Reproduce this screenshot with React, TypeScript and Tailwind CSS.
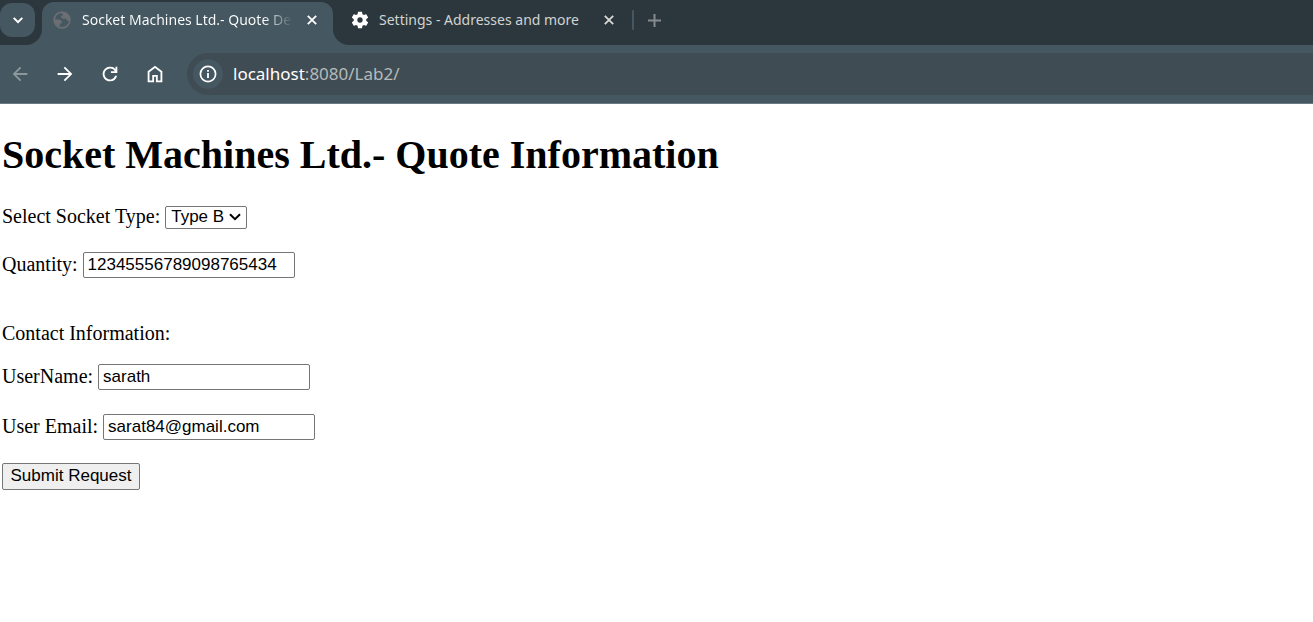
import React from "react";

const uiFont = "font-['Noto_Sans','Open_Sans',sans-serif]";
const labelClass = "pb-[2px]";
const fieldClass =
  "h-[26px] w-[212px] rounded-[2px] border border-[#767676] bg-white px-1 font-['Liberation_Sans',Arial,sans-serif] text-[17px] leading-5 text-black";

function CloseIcon() {
  return (
    <svg width="10" height="10" viewBox="0 0 10 10" fill="none" stroke="currentColor" strokeWidth="1.8" aria-hidden="true">
      <path d="M0.8 0.8 9.2 9.2M9.2 0.8 0.8 9.2" />
    </svg>
  );
}

function GlobeIcon() {
  return (
    <svg width="18" height="18" viewBox="0 0 18 18" aria-hidden="true">
      <circle cx="9" cy="9" r="7.9" fill="none" stroke="#6b6e72" strokeWidth="1.7" />
      <path fill="#6b6e72" d="M1.2 8.6h4.200c2 0 3.400 1 3.400 2.600v1.200H6.900v2.300l-2.100.3C2.600 13.600 1.200 11.400 1.200 8.600zM8.600 1.200c3.400 0 6 1.600 7.200 4.200l.9 4.400h-1.800c-1.200 0-1.600-.8-1.600-2H10c-1.300 0-2-.6-2-1.700 0-1 .7-1.600 1.700-1.600V2.900H8.600z" />
    </svg>
  );
}

function GearIcon() {
  return (
    <svg width="20" height="20" viewBox="0 0 24 24" fill="#fff" aria-hidden="true">
      <path d="M19.43 12.98c.04-.32.07-.64.07-.98s-.03-.66-.07-.98l2.11-1.65c.19-.15.24-.42.12-.64l-2-3.46c-.12-.22-.39-.3-.61-.22l-2.49 1c-.52-.4-1.080-.73-1.690-.98l-.38-2.650C14.460 2.180 14.250 2 14 2h-4c-.25 0-.46.18-.49.42l-.38 2.650c-.61.25-1.170.59-1.690.98l-2.490-1c-.23-.09-.49 0-.61.22l-2 3.460c-.13.22-.07.49.12.64l2.110 1.650c-.04.32-.07.65-.07.98s.03.66.07.98l-2.110 1.650c-.19.15-.24.42-.12.64l2 3.460c.12.22.39.3.61.22l2.490-1c.52.4 1.080.73 1.690.98l.38 2.650c.03.24.24.42.49.42h4c.25 0 .46-.18.49-.42l.38-2.650c.61-.25 1.170-.59 1.690-.98l2.490 1c.23.09.49 0 .61-.22l2-3.460c.12-.22.07-.49-.12-.64l-2.110-1.650zM12 15.200a3.200 3.200 0 1 1 0-6.400 3.200 3.200 0 0 1 0 6.400z" />
    </svg>
  );
}

function NavButton({ label, dim, children }: { label: string; dim?: boolean; children: React.ReactNode }) {
  return (
    <button aria-label={label} className={`flex size-[33px] items-center justify-center ${dim ? "text-[#8d989d]" : "text-white"}`}>
      <svg width="22" height="22" viewBox="0 0 24 24" fill="currentColor" aria-hidden="true">
        {children}
      </svg>
    </button>
  );
}

function TabStrip() {
  return (
    <div className="flex h-[45px] bg-[#455760]">
      <div className="w-[42px] shrink-0 rounded-br-2xl bg-[#2c373d] pt-[3px]">
        <button aria-label="Search tabs" className="flex h-[34px] w-[35px] items-center justify-center rounded-xl bg-[#455760] text-white">
          <svg width="10" height="7" viewBox="0 0 10 7" fill="none" stroke="currentColor" strokeWidth="2" aria-hidden="true">
            <path d="M0.700 0.900 5 5.200 9.300 0.900" />
          </svg>
        </button>
      </div>
      <div className="w-[291px] shrink-0 bg-[#2c373d] pt-[2px]">
        <div className="flex h-full items-center rounded-t-xl bg-[#455760] pr-4 pb-[7px] pl-[11px] text-white">
          <GlobeIcon />
          <span className={`ml-[11px] w-[211px] bg-[linear-gradient(90deg,#fff_86%,transparent)] bg-clip-text text-[14px] leading-5 whitespace-nowrap text-transparent ${uiFont}`}>
            Socket Machines Ltd.- Quote De
          </span>
          <button aria-label="Close tab" className="ml-[14px]">
            <CloseIcon />
          </button>
        </div>
      </div>
      <div className="flex min-w-0 flex-1 items-center rounded-bl-2xl bg-[#2c373d] pb-[5px] pl-[17px]">
        <GearIcon />
        <span className={`ml-[9px] w-[204px] text-[14px] leading-5 whitespace-nowrap text-[#d0d3d2] ${uiFont}`}>
          Settings - Addresses and more
        </span>
        <button aria-label="Close tab" className="ml-[21px] text-[#d8dbd5]">
          <CloseIcon />
        </button>
        <span className="ml-[18px] h-5 w-0.5 rounded-full bg-[#455760]" />
        <button aria-label="New tab" className="ml-[14px] text-[#858b8d]">
          <svg width="13" height="13" viewBox="0 0 13 13" fill="none" stroke="currentColor" strokeWidth="2" aria-hidden="true">
            <path d="M6.500 0V13M0 6.500H13" />
          </svg>
        </button>
      </div>
    </div>
  );
}

function Toolbar() {
  return (
    <div className="flex h-[59px] items-center border-b border-[#6d7a81] bg-[#455760] pl-[3px]">
      <div className="flex shrink-0 gap-3">
        <NavButton label="Back" dim>
          <path d="M20 11H7.830l5.590-5.590L12 4l-8 8 8 8 1.410-1.410L7.830 13H20z" />
        </NavButton>
        <NavButton label="Forward">
          <path d="m12 4-1.410 1.410L16.170 11H4v2h12.170l-5.580 5.590L12 20l8-8z" />
        </NavButton>
        <NavButton label="Reload">
          <path d="M12 20a8 8 0 1 1 6-13.250V4h2v7h-7V9h4.200A6 6 0 1 0 17.650 14h2.100A8 8 0 0 1 12 20z" />
        </NavButton>
        <NavButton label="Home">
          <path d="M6 19h3v-6h6v6h3v-9l-6-4.500L6 10zm-2 2V9l8-6 8 6v12h-7v-6h-2v6z" />
        </NavButton>
      </div>
      <div className={`ml-4 flex h-[42px] min-w-0 flex-1 items-center rounded-l-full bg-[#404c53] pl-[6px] ${uiFont}`}>
        <button aria-label="View site information" className="flex size-[30px] items-center justify-center rounded-full bg-[#455760]">
          <svg width="18" height="18" viewBox="0 0 18 18" fill="none" stroke="#fff" aria-hidden="true">
            <circle cx="9" cy="9" r="7.600" strokeWidth="1.700" />
            <path d="M9 8V13M9 5V6.800" strokeWidth="1.800" />
          </svg>
        </button>
        <span className="ml-[10px] text-[17px] leading-6 text-[#b5babb]">
          <span className="text-white">localhost</span>:8080/Lab2/
        </span>
      </div>
    </div>
  );
}

export default function App() {
  return (
    <div className="min-h-screen bg-white">
      <header>
        <TabStrip />
        <Toolbar />
      </header>
      <main className="px-0.5 pt-7 font-['Liberation_Serif','Times_New_Roman',serif] text-[20px] leading-6 text-black">
        <h1 className="text-[40px] leading-[46px] font-bold">Socket Machines Ltd.- Quote Information</h1>
        <form className="mt-[26px]" onSubmit={(e) => e.preventDefault()}>
          <div className="flex h-[26px] items-center gap-[5px]">
            <label htmlFor="type" className={labelClass}>Select Socket Type:</label>
            <div className="grid items-center">
              <select
                id="type"
                defaultValue="B"
                className="col-start-1 row-start-1 h-[23px] w-[82px] appearance-none rounded-[2px] border border-[#767676] bg-white pl-[5px] font-['Liberation_Sans',Arial,sans-serif] text-[17px] leading-5"
              >
                <option value="A">Type A</option>
                <option value="B">Type B</option>
                <option value="C">Type C</option>
              </select>
              <svg className="pointer-events-none col-start-1 row-start-1 mr-[6px] justify-self-end" width="12" height="8" viewBox="0 0 12 8" fill="none" stroke="#000" strokeWidth="2" aria-hidden="true">
                <path d="M1 1.200 6 6.200 11 1.200" />
              </svg>
            </div>
          </div>
          <div className="mt-[22px] flex h-[26px] items-center gap-[5px]">
            <label htmlFor="quantity" className={labelClass}>Quantity:</label>
            <input id="quantity" type="text" defaultValue="12345556789098765434" className={fieldClass} />
          </div>
          <p className="mt-[43px] h-[26px]">Contact Information:</p>
          <div className="mt-[17px] flex h-[26px] items-center gap-[5px]">
            <label htmlFor="username" className={labelClass}>UserName:</label>
            <input id="username" type="text" defaultValue="sarath" className={fieldClass} />
          </div>
          <div className="mt-6 flex h-[26px] items-center gap-[5px]">
            <label htmlFor="email" className={labelClass}>User Email:</label>
            <input id="email" type="text" defaultValue="sarat84@gmail.com" className={fieldClass} />
          </div>
          <button
            type="submit"
            className="mt-[23px] block h-[27px] w-[138px] rounded-[2px] border border-[#767676] bg-[#efefef] pb-px font-['Liberation_Sans',Arial,sans-serif] text-[17px] leading-5 whitespace-nowrap"
          >
            Submit Request
          </button>
        </form>
      </main>
    </div>
  );
}
